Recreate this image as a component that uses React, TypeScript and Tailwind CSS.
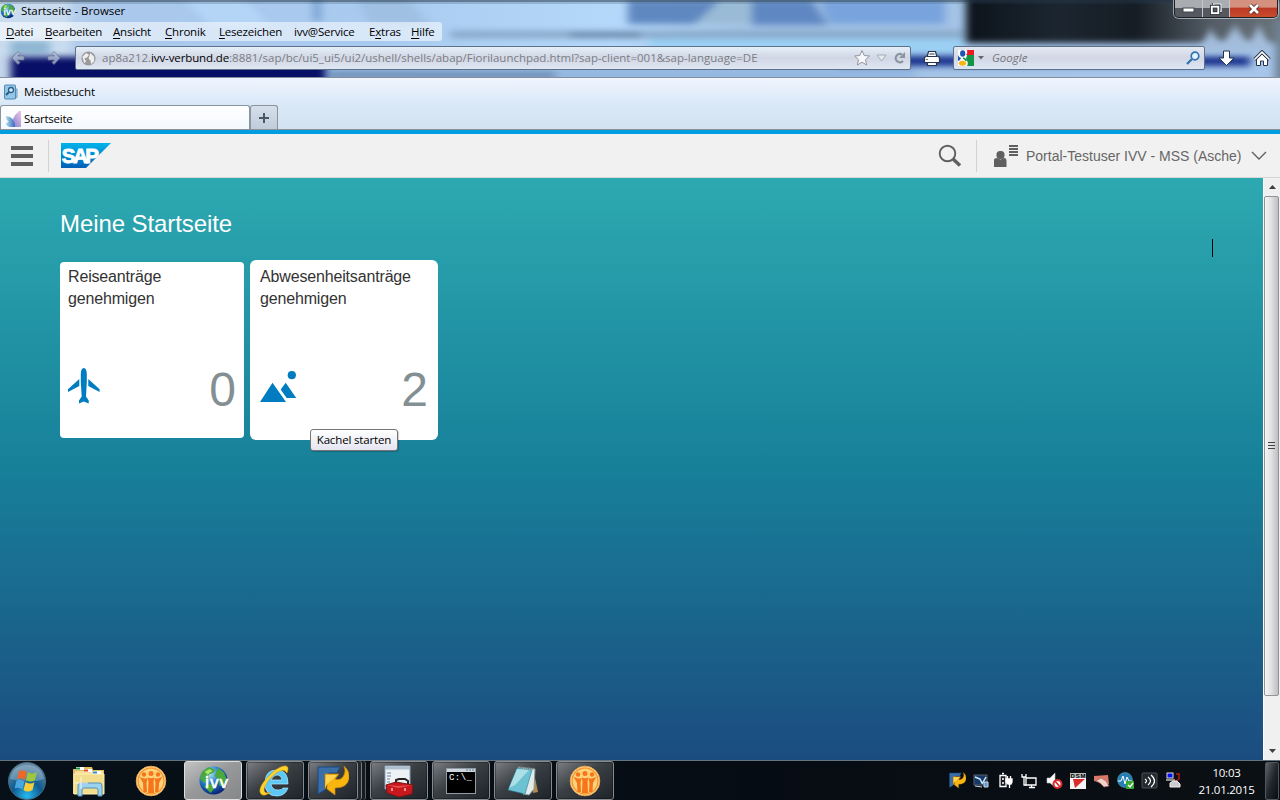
import React from "react";

const ui = "font-['Open_Sans','Noto_Sans',sans-serif]";

function GlassBackdrop() {
  return (
    <svg className="absolute inset-0 h-full w-full" viewBox="0 0 1280 78" preserveAspectRatio="none" aria-hidden="true">
      <defs>
        <filter id="b3" filterUnits="userSpaceOnUse" x="-60" y="-60" width="1400" height="200" colorInterpolationFilters="sRGB"><feGaussianBlur stdDeviation="4 3" /></filter>
        <filter id="b5" filterUnits="userSpaceOnUse" x="-60" y="-60" width="1400" height="200" colorInterpolationFilters="sRGB"><feGaussianBlur stdDeviation="3 4" /></filter>
        <linearGradient id="sky" x1="0" x2="1" y1="0" y2="0">
          <stop offset="0" stopColor="#c3d5ea" />
          <stop offset="0.1" stopColor="#a9c8ec" />
          <stop offset="0.3" stopColor="#a9cbef" />
          <stop offset="0.48" stopColor="#b4d8fa" />
          <stop offset="0.6" stopColor="#a3c3e5" />
          <stop offset="1" stopColor="#a6c5ea" />
        </linearGradient>
        <linearGradient id="night" x1="0" x2="1" y1="0" y2="0">
          <stop offset="0" stopColor="#0c131b" />
          <stop offset="0.27" stopColor="#1c2630" />
          <stop offset="0.5" stopColor="#151c24" />
          <stop offset="0.72" stopColor="#545d66" />
          <stop offset="1" stopColor="#747d84" />
        </linearGradient>
      </defs>
      <rect width="1280" height="78" fill="url(#sky)" />
      <g filter="url(#b3)">
        <rect x="-20" y="-14" width="90" height="70" fill="#c9dcef" />
        <path d="M180 -5h60l30 30h-60z" fill="#b5d5f7" />
        <path d="M355 -5h50l25 30h-60z" fill="#9fc0e3" />
        <rect x="314" y="-6" width="6" height="27" fill="#6b95cb" />
        <rect x="10" y="41" width="40" height="13" fill="#8db5d2" />
        <path d="M628 0h92l-24 24h-68z" fill="#5f88c0" />
        <path d="M720 0h34v24h-60z" fill="#9abbd6" />
        <path d="M752 0h60l16 25h-76z" fill="#5f88c2" />
        <path d="M820 0h125v24H830z" fill="#78a3dc" />
        <rect x="450" y="31" width="515" height="7" fill="#86a6c6" />
        <rect x="570" y="33" width="70" height="4" fill="#5d7b9c" />
        <rect x="650" y="38" width="315" height="17" fill="#9bd0f4" />
        <rect x="325" y="66" width="590" height="26" fill="#94b8e1" />
        <rect x="330" y="73" width="225" height="4" fill="#56749a" />
      </g>
      <rect x="11" y="57" width="315" height="40" fill="#080f66" filter="url(#b3)" />
      <rect x="966" y="-30" width="340" height="73" fill="url(#night)" filter="url(#b3)" />
      <rect x="840" y="56" width="410" height="10" fill="#17318c" filter="url(#b3)" />
      <path d="M1198 52l12-22 12 14 13-18 14 18 10-18 14 26z" fill="#a3bddc" filter="url(#b5)" />
      <rect x="1275" y="20" width="20" height="75" fill="#6e8296" filter="url(#b3)" />
      <rect width="1280" height="2" fill="#253747" fillOpacity=".55" />
      <rect y="2" width="1280" height="2" fill="#29445f" fillOpacity=".22" />
      <rect y="77" width="1280" height="1" fill="#848e9c" />
    </svg>
  );
}

function Globe({ size }: { size: number }) {
  return (
    <svg width={size} height={size} viewBox="0 0 32 32" className="overflow-visible">
      <defs>
        <radialGradient id="gl" cx=".35" cy=".25" r=".8"><stop offset="0" stopColor="#b4e7ff" /><stop offset=".45" stopColor="#2880cd" /><stop offset="1" stopColor="#041d72" /></radialGradient>
      </defs>
      <circle cx="16" cy="16" r="14.500" fill="url(#gl)" />
      <path d="M4 7l7-5 7 3-2 3-5 2 0 5-4 4-5-5zM21 3l6 5 3 8-3 7-5-2-1-6-4-4zM6 22l7-3 4 5-4 5z" fill="#4aa83c" />
      <path d="M7 7l5-3 3 2-5 4z" fill="#a8e36b" />
      <g fill="#fff" stroke="#fff" strokeWidth=".7" fontFamily="DejaVu Sans" fontSize="17">
        <text x="7" y="23.500">i</text>
        <text x="12" y="23.500" fontSize="16">v</text>
        <text x="22" y="23.500" fontSize="16">v</text>
      </g>
    </svg>
  );
}

const menu: [string, string, string, string][] = [
  ["", "D", "atei", "w-[39px]"],
  ["", "B", "earbeiten", "w-[68px]"],
  ["", "A", "nsicht", "w-[52px]"],
  ["", "C", "hronik", "w-[54px]"],
  ["", "L", "esezeichen", "w-[75px]"],
  ["ivv@Service", "", "", "w-[75px]"],
  ["E", "x", "tras", "w-[42px]"],
  ["", "H", "ilfe", "w-[30px]"],
];

function WindowButtons() {
  return (
    <div className="flex h-[18px] w-[104px] overflow-hidden rounded-b-[5px] border border-t-0 border-[#1c2126] shadow-[0_0_0_1px_rgba(210,220,230,.65)]">
      <div className="flex w-[28px] items-center justify-center border-r border-[#c4c8cc] bg-linear-to-b from-[#a9adb1] from-45% to-[#55595f] to-50% pt-[3px]">
        <svg width="13" height="6"><rect x="1" y="1" width="11" height="4" fill="#fff" stroke="#40464c" /></svg>
      </div>
      <div className="flex w-[27px] items-center justify-center border-r border-[#c4c8cc] bg-linear-to-b from-[#a9adb1] from-45% to-[#55595f] to-50%">
        <svg width="12" height="12" viewBox="0 0 13 13" fill="none"><path d="M4 3V1h8v8h-2" stroke="#30363d" strokeWidth="3" /><path d="M4 3V1h8v8h-2" stroke="#fff" strokeWidth="1.400" /><rect x="2" y="4" width="7" height="7" stroke="#30363d" strokeWidth="4" /><rect x="2" y="4" width="7" height="7" stroke="#fff" strokeWidth="2" /></svg>
      </div>
      <div className="flex flex-1 items-center justify-center bg-linear-to-b from-[#d5917f] from-40% via-[#bd3925] via-50% to-[#c84c2c]">
        <svg width="14" height="12" viewBox="0 0 14 12"><path d="M3 2l8 8M11 2l-8 8" stroke="#532b29" strokeWidth="4.500" /><path d="M3 2l8 8M11 2l-8 8" stroke="#fff" strokeWidth="2.700" /></svg>
      </div>
    </div>
  );
}

function NavArrow({ flip }: { flip?: boolean }) {
  return (
    <svg width="14" height="16" viewBox="0 0 14 16" className={flip ? "-scale-x-100" : ""}>
      <path d="M7 1.500L1 8l6 6.500 2-2L6.500 10H13V6H6.500L9 3.500z" fill="#b6c1d8" fillOpacity=".75" stroke="#66758f" strokeOpacity=".7" />
    </svg>
  );
}

function BrowserTop() {
  return (
    <header className={`relative h-[78px] shrink-0 overflow-hidden text-[11.5px] leading-[16px] text-black ${ui}`}>
      <GlassBackdrop />
      <div className="relative flex h-full flex-col">
        <div className="flex h-[22px] justify-between pr-[2px]">
          <div className="flex items-center gap-[5px]">
            <Globe size={16} />
            <span className="whitespace-nowrap tracking-[-0.05px]">Startseite - Browser</span>
          </div>
          <WindowButtons />
        </div>
        <nav className="flex h-[19px] w-[442px] items-center rounded-r-[3px] bg-white/55 pl-[6px]">
          {menu.map(([pre, key, post, w]) => (
            <span key={pre + key + post} className={`shrink-0 whitespace-nowrap tracking-[-0.2px] ${w}`}>
              {pre}<span className="underline underline-offset-[2px]">{key}</span>{post}
            </span>
          ))}
        </nav>
        <div className="flex h-[36px] items-start pt-[5px]">
          <div className="flex h-[24px] w-[75px] items-center gap-[22px] pl-[11px]"><NavArrow /><NavArrow flip /></div>
          <div className="flex h-[24px] w-[836px] items-center rounded-[2px] border border-[#5d7188] bg-linear-to-b from-[#e4eff8] via-[#d1d6e5] to-[#dfe7f3] pl-[5px] text-[#7b7d82]">
            <svg width="15" height="15" viewBox="0 0 16 16"><circle cx="8" cy="8" r="7.500" fill="#999" /><path d="M1.500 6l4-4 3 2-2 3-3 1 2 3-2 2zM10 2l4 4v5l-3 3-1-4-2-2z" fill="#eee" /></svg>
            <span className="ml-[6px] whitespace-nowrap tracking-[-0.01px]">ap8a212.<span className="tracking-[-0.12px] text-black">ivv-verbund.de</span>:8881/sap/bc/ui5_ui5/ui2/ushell/shells/abap/Fiorilaunchpad.html?sap-client=001&amp;sap-language=DE</span>
            <svg className="ml-auto shrink-0" width="58" height="18" viewBox="0 0 58 18">
              <path d="M10 1.500l2.200 5 5.300.5-4 3.700 1.100 5.300-4.600-2.800L5.400 16l1.100-5.300-4-3.700 5.300-.5z" fill="#fff" fillOpacity=".8" stroke="#92969d" />
              <path d="M25 6h9l-4.500 6z" fill="#e4eaf0" stroke="#a4abb3" />
              <path d="M50 5.500a4.200 4.200 0 1 0 1 6.500" fill="none" stroke="#8a949e" strokeWidth="2.200" /><path d="M53 3v6h-6z" fill="#8a949e" />
            </svg>
          </div>
          <svg className="mx-[12px] mt-[4px]" width="18" height="17" viewBox="0 0 18 17">
            <path d="M4.500 5.500l1-4h7l1 4 3 2v5h-3v3h-9v-3h-3v-5z" fill="#fff" stroke="#27364d" strokeWidth="1.200" /><path d="M4 6.500h10M4 12.500h10M6.500 4h5" stroke="#27364d" /><path d="M3 9.500h2" stroke="#777" />
          </svg>
          <div className="flex h-[24px] w-[252px] items-center rounded-[2px] border border-[#5d7188] bg-linear-to-b from-[#e3e9f2] via-[#d3d7e5] to-[#dce6f4] pr-[4px] pl-[4px]">
            <svg width="16" height="16" viewBox="0 0 16 16"><rect width="16" height="16" fill="#fff" /><path d="M9 0h7v5H8q2-2 1-5z" fill="#ed1c24" /><path d="M9 5h7v11H9q2-3-1-7z" fill="#159447" /><path d="M0 5q1 3 3 3l-1 2-2 1z" fill="#1b57bb" /><ellipse cx="4.700" cy="3.500" rx="2.600" ry="3.300" fill="#1e55b5" /><path d="M5 8q3 1 3 3" stroke="#1e9547" strokeWidth="1.800" fill="none" /><ellipse cx="4.500" cy="13.200" rx="3.700" ry="2.500" fill="#f6b515" /></svg>
            <svg className="ml-[4px]" width="6" height="4"><path d="M0 0h6L3 3.500z" fill="#65676b" /></svg>
            <span className="ml-[8px] text-[#75767c] italic">Google</span>
            <svg className="ml-auto" width="14" height="14" viewBox="0 0 14 14"><circle cx="9" cy="5" r="3.800" fill="#e3f4fe" stroke="#3274b0" strokeWidth="1.700" /><path d="M6 8l-5 5" stroke="#3274b0" strokeWidth="2.300" /></svg>
          </div>
          <svg className="mt-[4px] ml-[12px]" width="18" height="17" viewBox="0 0 18 17"><path d="M6.500 1h6v7H17l-7.500 7.500L2 8h4.500z" fill="#fff" stroke="#25344c" /></svg>
          <svg className="mt-[4px] ml-[18px]" width="18" height="17" viewBox="0 0 18 17"><path d="M3.500 9v6.500h4V11h3v4.500h4V9L9 4z" fill="#fff" stroke="#26344a" /><path d="M1.500 9.500L9 2l7.500 7.500" fill="none" stroke="#26344a" strokeWidth="3.400" /><path d="M1.500 9.500L9 2.200l7.500 7.300" fill="none" stroke="#fff" strokeWidth="1.600" /></svg>
        </div>
      </div>
    </header>
  );
}

function Tabs() {
  return (
    <div className={`flex h-[52px] shrink-0 flex-col border-b border-[#8c9299] bg-linear-to-b from-[#f0f5fe] via-[#dae9f8] via-50% to-[#d2e2f0] text-[11.5px] text-black ${ui}`}>
      <div className="flex h-[27px] items-center gap-[6px] pl-[3px]">
        <svg width="15" height="16" viewBox="0 0 15 16"><path d="M12 5h2v8l-2 2" fill="#b5dcf4" stroke="#6b9abd" /><rect x="1.500" y="1" width="11" height="14" rx="1" fill="#92c6ea" stroke="#5488ad" /><circle cx="8" cy="6" r="2.500" fill="#d4efff" stroke="#2b5c83" strokeWidth="1.300" /><path d="M6 8l-3 3" stroke="#2b5c83" strokeWidth="1.800" /></svg>
        <span className="tracking-[-0.08px]">Meistbesucht</span>
      </div>
      <div className="flex h-[24px]">
        <div className="flex w-[250px] items-center gap-[3px] rounded-t-[3px] border border-b-0 border-[#8b959f] bg-linear-to-b from-white to-[#f4f8fd] pt-[2px] pl-[5px]">
          <svg width="15" height="16" viewBox="0 0 15 16"><defs><linearGradient id="petal" x1="0" x2="1"><stop stopColor="#a5dcea" /><stop offset="1" stopColor="#3e68c0" /></linearGradient><linearGradient id="petal2" x1="0" x2="1" y1="1" y2="0"><stop stopColor="#7d7fd0" /><stop offset="1" stopColor="#f0c4e4" /></linearGradient></defs><path d="M6 16Q5 7 13 0h2v16z" fill="url(#petal2)" /><path d="M0 5q9 1 9 11H4q-4-1-4-4l3-1q-3-2-3-6z" fill="url(#petal)" /></svg>
          <span className="tracking-[-0.25px]">Startseite</span>
        </div>
        <div className="flex w-[28px] items-center justify-center rounded-t-[3px] border border-b-0 border-[#8b959f] bg-linear-to-b from-[#d5e0eb] to-[#bfccd9]">
          <svg width="12" height="12"><path d="M6 1v10M1 6h10" stroke="#4b5763" strokeWidth="2" /></svg>
        </div>
      </div>
    </div>
  );
}

function ShellHeader() {
  return (
    <div className="flex h-[48px] shrink-0 items-center border-t-4 border-b border-t-[#009de0] border-b-[#d6d6d6] bg-[#f1f1f1] pt-px font-['Liberation_Sans',Arial,sans-serif] text-[#666]">
      <svg className="ml-[11px]" width="22" height="20"><path d="M0 2h22M0 10h22M0 18h22" stroke="#5f5f5f" strokeWidth="4" /></svg>
      <div className="mr-[12px] ml-[15px] h-[32px] w-px bg-[#d2d2d2]" />
      <svg className="-mt-px" width="50" height="25" viewBox="0 0 50 25">
        <defs><linearGradient id="sap" x1="0" x2="0" y1="0" y2="1"><stop stopColor="#00b4ea" /><stop offset="1" stopColor="#0060b7" /></linearGradient></defs>
        <path d="M0 0h50L25 25H0z" fill="url(#sap)" />
        <text x=".7" y="19.500" fontFamily="Liberation Sans" fontSize="20.500" fontWeight="700" fill="#fff" stroke="#fff" strokeWidth=".9" letterSpacing="-2.400">SAP</text>
      </svg>
      <svg className="ml-auto" width="24" height="24" viewBox="0 0 24 24"><circle cx="9.500" cy="9.500" r="7.800" fill="none" stroke="#606060" strokeWidth="1.900" /><path d="M15 15l7 6.500" stroke="#606060" strokeWidth="3.500" /></svg>
      <div className="mr-[17px] ml-[14px] h-[32px] w-px bg-[#d2d2d2]" />
      <svg width="24" height="22" viewBox="0 0 24 22" fill="#606060"><rect x="2.500" y="6" width="8" height="8" rx="3.500" /><path d="M0 22v-7q0-2 3-2l3.500 1.500L10 13q2.500 0 2.500 3v6zM15 0h9v2h-9zM15 3h9v2h-9zM15 6h9v2h-9zM15 9h9v2h-9z" /></svg>
      <span className="ml-[8px] w-[217px] text-[14px] whitespace-nowrap">Portal-Testuser IVV - MSS (Asche)</span>
      <svg className="mr-[13px] ml-[8px]" width="16" height="10" fill="none"><path d="M1 1l7 7 7-7" stroke="#606060" strokeWidth="1.400" /></svg>
    </div>
  );
}

function Launchpad() {
  return (
    <main className="flex h-[582px] shrink-0 font-['Liberation_Sans',Arial,sans-serif]">
      <div className="relative flex-1 bg-linear-to-b from-[#2da9b1] via-[#178099] via-50% to-[#1b4c80] pt-[32px] pl-[60px]">
        <h1 className="text-[24px] leading-[28px] tracking-[-0.08px] text-white">Meine Startseite</h1>
        <div className="mt-[22px] flex items-center gap-[6px] text-[#333]">
          <section className="flex h-[176px] w-[184px] flex-col rounded-[4px] bg-white px-[8px] pt-[4px]">
            <h2 className="text-[16px] leading-[22px] tracking-[-0.16px]">Reiseanträge<br />genehmigen</h2>
            <div className="mt-[50px] flex items-center justify-between">
              <svg width="32" height="37" viewBox="0 0 32 37" className="mb-[7px]" fill="#007cc0"><path d="M12.800 6q.2-6 3-6t3 6v8L18 28.500l2.700 4v3l-5-2-4.700 2v-3l2.700-4L12.800 14zM11.300 11v7L0 24v-2.800zM20.300 11v7l11.300 6v-2.800z" /></svg>
              <span className="text-[48px] leading-[60px] text-[#848f94]">0</span>
            </div>
          </section>
          <section className="relative flex h-[180px] w-[188px] flex-col rounded-[6px] bg-white px-[10px] pt-[6px]">
            <h2 className="text-[16px] leading-[22px] tracking-[-0.16px]">Abwesenheitsanträge<br />genehmigen</h2>
            <div className="mt-[50px] flex items-center justify-between">
              <svg width="37" height="32" viewBox="0 0 37 32" className="mb-[7px]" fill="#007cc0"><circle cx="31.800" cy="4.200" r="4.100" /><path d="M0 31l12.500-19.300L26 31zM20.700 18.500l5-6.800L36.200 27h-9.500z" /></svg>
              <span className="text-[48px] leading-[60px] text-[#848f94]">2</span>
            </div>
            <div className={`absolute top-[169px] left-[60px] flex h-[22px] w-[88px] items-center justify-center rounded-[3px] border border-[#767676] bg-linear-to-b from-white to-[#e4e5f0] text-[11.5px] tracking-[-0.15px] whitespace-nowrap text-black shadow-[1px_1px_1px_rgba(0,0,0,.2)] ${ui}`}>Kachel starten</div>
          </section>
        </div>
        <div className="absolute top-[61px] left-[1212px] h-[18px] w-px bg-black" />
      </div>
      <div className="flex w-[17px] flex-col border-l border-white bg-[#f0f0f0]">
        <div className="flex h-[18px] items-center justify-center"><svg width="7" height="4"><path d="M0 4h7L3.500 0z" fill="#404040" /></svg></div>
        <div className="flex h-[500px] w-[15px] items-center justify-center rounded-[2px] border border-[#929297] bg-linear-to-r from-[#f5f5f5] via-[#e0e0e2] via-50% to-[#bdbdc3]">
          <svg width="7" height="8"><path d="M0 .5h7M0 3.500h7M0 6.500h7" stroke="#444" /></svg>
        </div>
        <div className="mt-auto flex h-[18px] items-center justify-center"><svg width="7" height="4"><path d="M0 0h7L3.500 4z" fill="#404040" /></svg></div>
      </div>
    </main>
  );
}

function PeopleIcon() {
  return (
    <svg width="32" height="32" viewBox="0 0 32 32"><circle cx="16" cy="16" r="14.800" fill="#fff3cf" stroke="#f0a445" strokeWidth="1" /><circle cx="16" cy="16" r="13" fill="#ffd27c" stroke="#f59a30" strokeWidth="1.500" /><g fill="#f5761a"><circle cx="9" cy="9.500" r="2.200" /><circle cx="16" cy="8.500" r="2.500" /><circle cx="23" cy="9.500" r="2.200" /><path d="M4.500 11.500q4 3 8 1.500l-1 5 .5 9H8.500L8 18zM12.500 12.500q3.500 1.500 7 0l-1 4 .5 11.500h-6l.5-11.500zM27.500 11.500q-4 3-8 1.500l1 5-.5 9h3.500l.5-9z" /></g></svg>
  );
}

function ArrowIcon({ size }: { size: number }) {
  return <svg width={size} height={size} viewBox="0 0 32 32"><path d="M1 2h22l-3 6h-8v6l-4 1v10l-7 4z" fill="#3a6ea8" stroke="#184a83" /><path d="M8 9h14l-4 5q6 2 9-4 2-4 0-9 6 5 5 13-2 9-14 9v7l-8-6v-6l-2 6z" fill="#f7b50e" stroke="#c58113" strokeWidth=".7" /><path d="M9 10h11l-4 4-6 5-2 4z" fill="#ffd34f" /></svg>;
}

function Explorer() {
  return <svg width="34" height="32" viewBox="0 0 34 32"><path d="M1 4h9l1-2h9l1 3h11v24H1z" fill="#dfbf62" /><path d="M3 6h28v22H3z" fill="#f5df9b" /><path d="M2 9h30v20H2z" fill="#f2dd8d" stroke="#fff0b3" /><path d="M4 3.500h8M12 5.500h8M21 7.500h8" stroke="#fff" strokeWidth="3" /><path d="M4 3.500h4" stroke="#149945" strokeWidth="2" /><path d="M12 5.500h4" stroke="#d64e2e" strokeWidth="2" /><path d="M21 7.500h4" stroke="#2c8bd3" strokeWidth="2" /><path d="M6 31V21q0-3 2-3h20q2 0 2 3v10h-4v-6q0-2-2-2H12q-2 0-2 2v6z" fill="#9ad2ef" stroke="#5791b6" /><path d="M9 12v12M3 18h13" stroke="#fff" strokeOpacity=".8" /></svg>;
}

function IeIcon() {
  return <svg width="34" height="34" viewBox="0 0 34 34"><path d="M30 20H13q1 6 7 6 4 0 5-2h5q-3 8-11 8-12 0-12-13T19 6q11 0 11 14zM13 16h11q-1-5-5-5t-6 5z" fill="#5bc8f5" fillRule="evenodd" stroke="#b5edff" strokeWidth=".7" /><path d="M29 9q3-8-3-7Q19 3 9 14T3 30q3 3 10-2-7 3-7-3Q8 17 17 10t12-1z" fill="#ffd329" stroke="#dda316" strokeWidth=".6" /></svg>;
}

function Toolbox() {
  return <svg width="34" height="34" viewBox="0 0 34 34"><path d="M3 2h25v23H3z" fill="#edf2f6" stroke="#8ca0b1" /><path d="M3 4h25" stroke="#adbfce" strokeWidth="3" /><path d="M5 9h4M5 12h4M5 15h3M5 18h3" stroke="#718496" /><path d="M14 19v-3l3-1h6l3 2v3" fill="none" stroke="#292323" strokeWidth="2" /><path d="M4 21l10-3 17 3-1 9-13 3L5 29z" fill="#c8181d" stroke="#7a1515" /><path d="M5 21l11 1 15-1-15 3z" fill="#e8504a" /><path d="M10 24v3M23 24v3" stroke="#f0bdb6" strokeWidth="1.500" /></svg>;
}

function Terminal() {
  return <svg width="30" height="26" viewBox="0 0 30 26"><rect x=".5" y=".5" width="29" height="25" fill="#000" stroke="#929ba4" /><path d="M1 2.500h28" stroke="#ccd7df" strokeWidth="3" /><path d="M20 2h8" stroke="#5e7a91" strokeDasharray="2 1" /><text x="3" y="12" fill="#fff" fontSize="9" fontFamily="Liberation Mono" textLength="23">C:\_</text></svg>;
}

function Notebook() {
  return <svg width="32" height="32" viewBox="0 0 32 32"><path d="M26 3l5 24-5 1z" fill="#b28b52" /><path d="M11 2l17 2-1 20-5 6-6-1z" fill="#e3eaea" stroke="#819da0" /><path d="M10 3l15 2-7 24L1 25z" fill="#6cc2d3" stroke="#267c93" strokeWidth=".6" /><path d="M10 4l12 1L8 20l-6 3z" fill="#d5f3f4" fillOpacity=".6" /><path d="M11 2l16 2" stroke="#777" strokeWidth="2" strokeDasharray="1 1" /></svg>;
}

function StartOrb() {
  return <svg width="40" height="40" viewBox="0 0 40 40"><defs><radialGradient id="orb" cx=".5" cy=".9" r=".9"><stop stopColor="#27baf0" /><stop offset=".45" stopColor="#0e5b91" /><stop offset="1" stopColor="#6d91a7" /></radialGradient></defs><circle cx="20" cy="20" r="18.500" fill="url(#orb)" stroke="#47697f" /><path d="M3 18Q6 4 20 4t17 14q-14 5-34 0z" fill="#fff" fillOpacity=".24" /><path d="M12 10q4-2 8 1l-2 8q-4-3-8-1z" fill="#e9692c" /><path d="M21 11q4 3 9 0l-2 8q-4 3-9 0z" fill="#9bc83d" /><path d="M9.500 19.500q4-2 8 1l-2 8q-4-3-8-1z" fill="#4aa6e1" /><path d="M18.500 21q5 3 9 0l-2 8q-5 3-9 0z" fill="#f8cd39" /></svg>;
}

const tb = "flex h-[39px] shrink-0 items-center justify-center rounded-[3px] border border-[#878b8f] bg-linear-to-br from-[#7c7f83] via-[#3a3f44] via-45% to-[#1d2328] shadow-[inset_0_0_0_1px_rgba(0,0,0,.3)]";

function Tray() {
  return (
    <div className="flex items-center gap-[6px]">
      <div className="w-[18px]"><ArrowIcon size={17} /></div>
      <svg width="18" height="18" viewBox="0 0 18 18"><rect x="1" y="3" width="13" height="10" fill="#173764" stroke="#56616e" /><path d="M2 5l5 2 2 4M9 12l4-7" stroke="#d2eaff" strokeWidth="1.500" fill="none" /><path d="M11 10h4v5h-4zM2 14l7 1" fill="#5e9ad1" stroke="#ccd8df" /></svg>
      <svg width="18" height="18" viewBox="0 0 18 18"><path d="M3 3.500h6v11H3zM5 1.500h2M5 7h2M5 11h2" fill="#1a1e22" stroke="#fff" strokeWidth="1.300" /><path d="M9 7h6v3l-1 2h-3l-2-2zM10.500 4v3M13.500 4v3M12.500 12v4" fill="#fff" stroke="#fff" strokeWidth="1.300" /></svg>
      <svg width="18" height="18" viewBox="0 0 18 18" fill="none" stroke="#fff"><path d="M5 6h10v7H5zM8 15.500h6M10.500 13v2" strokeWidth="1.300" /><path d="M1 2v3h4V2M3 5v8h2" strokeWidth="1.300" /></svg>
      <svg width="18" height="18" viewBox="0 0 18 18"><path d="M2 6h3l5-5v14l-5-4H2z" fill="#fff" stroke="#bbb" strokeWidth=".6" /><circle cx="12.500" cy="12" r="4" fill="#fff" stroke="#d8292c" strokeWidth="2" /><path d="M10 9l5 6" stroke="#d8292c" strokeWidth="1.700" /></svg>
      <svg width="18" height="18" viewBox="0 0 18 18"><rect x="1" y="1" width="16" height="16" fill="#f5f5f5" /><rect x="1" y="1" width="16" height="5" fill="#b8bdba" /><text x="1.500" y="6" fontSize="6" fontWeight="700" fontFamily="Liberation Sans" textLength="15">DSM</text><path d="M4 7h12L6 16z" fill="#d92d2d" /></svg>
      <svg width="18" height="18" viewBox="0 0 18 18"><path d="M1 4l14-1 1 9-5 1-6-3-4-1z" fill="#d97769" /><path d="M3 9l5-3 5 3 3 5-5 1-4-4z" fill="#efd3ca" stroke="#aa5f56" strokeWidth=".6" /></svg>
      <svg width="18" height="18" viewBox="0 0 18 18"><circle cx="8" cy="8" r="7.500" fill="#267fb1" stroke="#4f9dbd" strokeWidth=".6" /><path d="M1 9h3l2-5 2 8 2-7 2 4h3" fill="none" stroke="#fff" /><rect x="9" y="9" width="8" height="8" fill="#36a935" /><path d="M11 13l2 2 3-4" fill="none" stroke="#fff" strokeWidth="1.300" /></svg>
      <svg width="18" height="18" viewBox="0 0 18 18"><rect x="1" y="1" width="15" height="15" rx="1" fill="#24292d" stroke="#4c5155" /><g fill="none" stroke="#fff" strokeWidth="1.200"><path d="M4 7q3 2 0 4M7 5q5 4 0 8M10 3q7 6 0 12" /></g></svg>
      <svg width="18" height="18" viewBox="0 0 18 18"><rect x="2" y="1" width="6" height="5" fill="#0010f5" stroke="#ddd" /><path d="M1 8h9" stroke="#bbb" strokeWidth="1.500" /><path d="M11 2h3v5l-3 2" fill="none" stroke="#8c1714" strokeWidth="2" /><path d="M5 11l3-2h4l3 3v3H5z" fill="#ccc" stroke="#eee" /></svg>
    </div>
  );
}

function Taskbar() {
  return (
    <footer className={`flex h-[40px] shrink-0 items-center overflow-hidden border-t border-[#65737f] bg-linear-to-r from-[#071018] via-[#060c13] via-60% to-[#0b1014] text-white ${ui}`}>
      <div className="w-[66px] pl-[7px]"><StartOrb /></div>
      <div className="flex w-[46px] justify-center"><Explorer /></div>
      <div className="flex w-[72px] justify-center pl-[6px]"><PeopleIcon /></div>
      <div className="flex h-[39px] w-[58px] shrink-0 items-center justify-center rounded-[3px] border border-[#dedede] bg-linear-to-br from-[#c4c4c4] via-[#98999b] via-45% to-[#858789]"><Globe size={31} /></div>
      <div className={`ml-[4px] w-[58px] ${tb}`}><IeIcon /></div>
      <div className={`ml-[4px] w-[50px] ${tb}`}><ArrowIcon size={32} /></div>
      <div className="h-[39px] w-[4px] rounded-r-[3px] border-r border-[#777c80] bg-[#22272c]" />
      <div className="h-[39px] w-[4px] rounded-r-[3px] border-r border-[#5a6065] bg-[#171b20]" />
      <div className={`ml-[4px] w-[58px] ${tb}`}><Toolbox /></div>
      <div className={`ml-[4px] w-[58px] ${tb}`}><Terminal /></div>
      <div className={`ml-[4px] w-[58px] ${tb}`}><Notebook /></div>
      <div className={`ml-[4px] w-[58px] ${tb}`}><PeopleIcon /></div>
      <div className="ml-auto"><Tray /></div>
      <div className="ml-[10px] w-[67px] text-center text-[11.5px] leading-[17px] tracking-[-0.25px]">10:03<br />21.01.2015</div>
      <div className="mr-px ml-[5px] h-[38px] w-[14px] rounded-[2px] border border-[#4f555a] bg-linear-to-br from-[#60656a] via-[#20262b] to-[#090e13]" />
    </footer>
  );
}

export default function App() {
  return (
    <div className="flex h-[800px] w-[1280px] flex-col overflow-hidden bg-[#f1f1f1]">
      <BrowserTop />
      <Tabs />
      <ShellHeader />
      <Launchpad />
      <Taskbar />
    </div>
  );
}
